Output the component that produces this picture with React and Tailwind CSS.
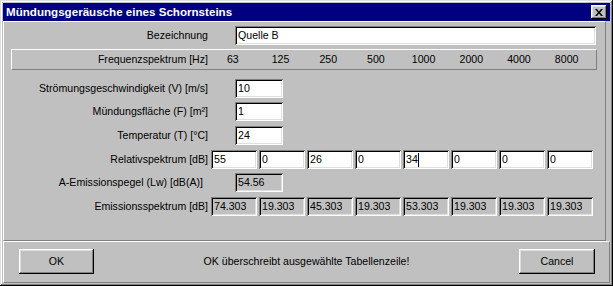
import React from "react";

function Row({ label, children, className = "", labelClass = "" }) {
  return (
    <div className={"flex items-center h-[19px] " + className}>
      <div className={"w-[204px] shrink-0 text-right whitespace-nowrap " + labelClass}>{label}</div>
      {children}
    </div>
  );
}

function Box({ children, className = "" }) {
  return (
    <div
      className={
        "h-[19px] flex items-center pl-[3px] whitespace-nowrap shadow-[inset_1px_1px_#808080,inset_-1px_-1px_#ffffff,inset_2px_2px_#000000,inset_-2px_-2px_#dfdfdf] " +
        className
      }
    >
      {children}
    </div>
  );
}

export default function App() {
  const freqs = ["63", "125", "250", "500", "1000", "2000", "4000", "8000"];
  const rel = ["55", "0", "26", "0", "34", "0", "0", "0"];
  const emis = ["74.303", "19.303", "45.303", "19.303", "53.303", "19.303", "19.303", "19.303"];
  return (
    <div className="w-[613px] h-[286px] bg-[#c0c0c0] p-[3px] shadow-[inset_-1px_-1px_#000000,inset_1px_1px_#dfdfdf,inset_-2px_-2px_#808080,inset_2px_2px_#ffffff] text-black text-[10.6px] leading-none [font-family:'Liberation_Sans',Arial,sans-serif] flex flex-col overflow-hidden">
      <div className="h-[18px] shrink-0 bg-[#000080] flex items-center justify-between pl-[3px] pr-[3px]">
        <span className="text-white font-bold text-[11.6px] whitespace-nowrap">Mündungsgeräusche eines Schornsteins</span>
        <div className="w-[16px] h-[14px] bg-[#c0c0c0] flex items-center justify-center shadow-[inset_-1px_-1px_#000000,inset_1px_1px_#ffffff,inset_-2px_-2px_#808080,inset_2px_2px_#dfdfdf]">
          <svg width="8" height="7" viewBox="0 0 8 7" className="block">
            <path d="M0 0h2l2 2.5L6 0h2L5 3.5 8 7H6L4 4.5 2 7H0l3-3.5z" fill="#000" />
          </svg>
        </div>
      </div>

      <div className="w-[603px] h-[220px] shrink-0 border border-t-white border-l-white border-r-[#808080] border-b-[#808080] flex flex-col">
        <Row label="Bezeichnung" className="mt-[4px]">
          <Box className="ml-[27px] w-[361px] bg-white">Quelle B</Box>
        </Row>

        <div className="mt-[4px] ml-[7px] w-[586px] h-[21px] shrink-0 border border-t-white border-l-white border-r-[#808080] border-b-[#808080] flex items-center">
          <div className="w-[196px] shrink-0 text-right whitespace-nowrap">Frequenzspektrum [Hz]</div>
          <div className="ml-[1px] grid grid-cols-[repeat(8,47.7px)]">
            {freqs.map((f) => (
              <div key={f} className="text-center">{f}</div>
            ))}
          </div>
        </div>

        <Row label="Strömungsgeschwindigkeit (V) [m/s]" className="mt-[9px]">
          <Box className="ml-[27px] w-[48px] bg-white">10</Box>
        </Row>
        <Row label="Mündungsfläche (F) [m²]" className="mt-[4px]">
          <Box className="ml-[27px] w-[48px] bg-white">1</Box>
        </Row>
        <Row label="Temperatur (T) [°C]" className="mt-[5px]">
          <Box className="ml-[27px] w-[48px] bg-white">24</Box>
        </Row>
        <Row label="Relativspektrum [dB]" className="mt-[5px]">
          <div className="ml-[3px] grid grid-cols-[repeat(8,46px)] gap-x-[2px]">
            {rel.map((v, i) => (
              <Box key={i} className="bg-white">
                {v}
                {i === 4 && <span className="inline-block w-px h-[14px] bg-black" />}
              </Box>
            ))}
          </div>
        </Row>
        <Row label="A-Emissionspegel (Lw) [dB(A)]" className="mt-[4px]" labelClass="pr-[5px]">
          <Box className="ml-[27px] w-[48px] bg-[#c0c0c0]">54.56</Box>
        </Row>
        <Row label="Emissionsspektrum [dB]" className="mt-[5px]">
          <div className="ml-[3px] grid grid-cols-[repeat(8,46px)] gap-x-[2px]">
            {emis.map((v, i) => (
              <Box key={i} className="bg-[#c0c0c0]">{v}</Box>
            ))}
          </div>
        </Row>
      </div>

      <div className="flex-1 border border-t-white border-l-white border-r-[#808080] border-b-[#808080] flex items-start pt-[7px] pl-[15px] pr-[14px]">
        <div className="w-[75px] h-[25px] flex items-center justify-center shadow-[inset_-1px_-1px_#000000,inset_1px_1px_#ffffff,inset_-2px_-2px_#808080,inset_2px_2px_#dfdfdf]">OK</div>
        <div className="flex-1 h-[25px] flex items-center justify-center whitespace-nowrap">OK überschreibt ausgewählte Tabellenzeile!</div>
        <div className="w-[76px] h-[25px] flex items-center justify-center shadow-[inset_-1px_-1px_#000000,inset_1px_1px_#ffffff,inset_-2px_-2px_#808080,inset_2px_2px_#dfdfdf]">Cancel</div>
      </div>
    </div>
  );
}
